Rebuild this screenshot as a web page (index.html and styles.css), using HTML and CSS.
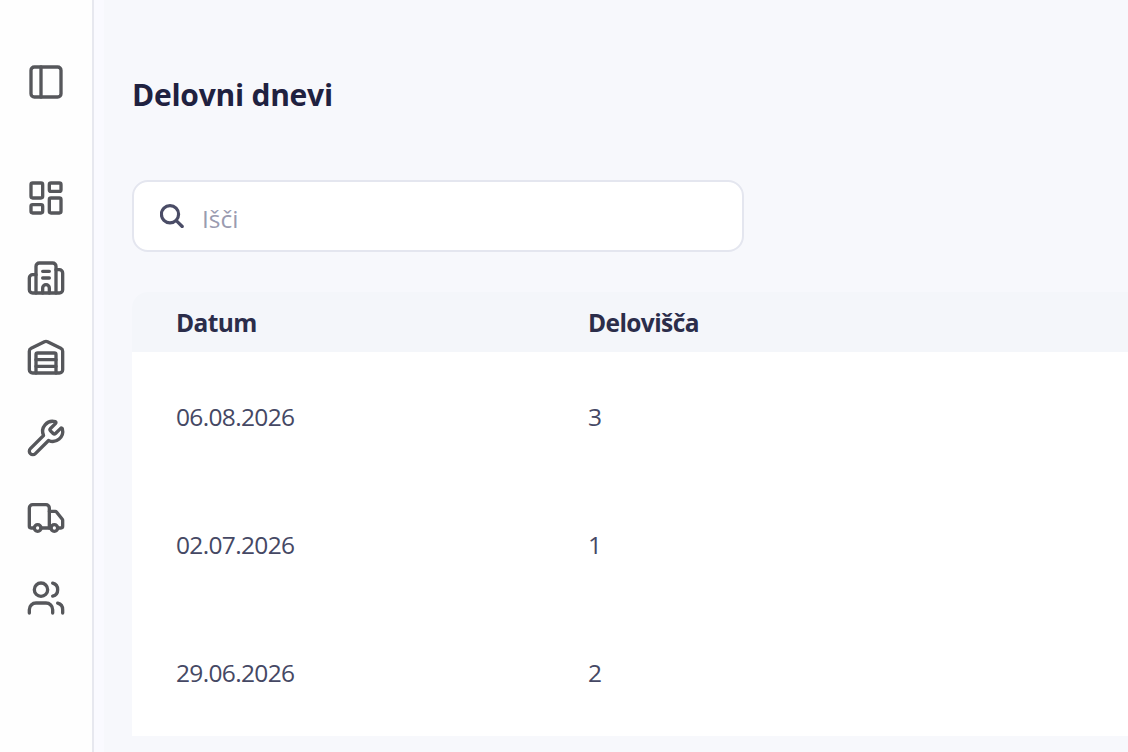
FILE: index.html
```
<!DOCTYPE html>
<html lang="sl">
	<head>
		<meta charset="UTF-8" />
		<meta name="viewport" content="width=device-width, initial-scale=1.0" />
		<title>Delovni dnevi</title>
		<link rel="stylesheet" href="styles.css">
	</head>
	<body>
		<nav class="sidebar">
			<a class="nav-icon toggle">
				<svg viewBox="0 0 24 24"><rect x="3" y="3" width="18" height="18" rx="2" /><path d="M9 3v18" /></svg>
			</a>
			<a class="nav-icon">
				<svg viewBox="0 0 24 24"><rect x="3" y="3" width="7" height="9" rx="1" /><rect x="14" y="3" width="7" height="5" rx="1" /><rect x="14" y="12" width="7" height="9" rx="1" /><rect x="3" y="16" width="7" height="5" rx="1" /></svg>
			</a>
			<a class="nav-icon">
				<svg viewBox="0 0 24 24"><path d="M10 12h4M10 8h4M14 21v-3a2 2 0 0 0-4 0v3" /><path d="M6 10H4a2 2 0 0 0-2 2v7a2 2 0 0 0 2 2h16a2 2 0 0 0 2-2V9a2 2 0 0 0-2-2h-2" /><path d="M6 21V5a2 2 0 0 1 2-2h8a2 2 0 0 1 2 2v16" /></svg>
			</a>
			<a class="nav-icon">
				<svg viewBox="0 0 24 24"><path d="M18 21V10a1 1 0 0 0-1-1H7a1 1 0 0 0-1 1v11" /><path d="M22 19a2 2 0 0 1-2 2H4a2 2 0 0 1-2-2V8a2 2 0 0 1 1.132-1.803l7.95-3.974a2 2 0 0 1 1.837 0l7.948 3.974A2 2 0 0 1 22 8z" /><path d="M6 13h12M6 17h12" /></svg>
			</a>
			<a class="nav-icon">
				<svg viewBox="0 0 24 24"><path d="M14.7 6.3a1 1 0 0 0 0 1.4l1.6 1.6a1 1 0 0 0 1.4 0l3.106-3.105c.32-.322.863-.22.983.218a6 6 0 0 1-8.259 7.057l-7.91 7.91a1 1 0 0 1-2.999-3l7.91-7.91a6 6 0 0 1 7.057-8.259c.438.12.54.662.219.984z" /></svg>
			</a>
			<a class="nav-icon">
				<svg viewBox="0 0 24 24"><path d="M14 18V6a2 2 0 0 0-2-2H4a2 2 0 0 0-2 2v11a1 1 0 0 0 1 1h2" /><path d="M15 18H9" /><path d="M19 18h2a1 1 0 0 0 1-1v-3.65a1 1 0 0 0-.22-.624l-3.48-4.35A1 1 0 0 0 17.52 8H14" /><circle cx="17" cy="18" r="2" /><circle cx="7" cy="18" r="2" /></svg>
			</a>
			<a class="nav-icon">
				<svg viewBox="0 0 24 24"><path d="M16 21v-2a4 4 0 0 0-4-4H6a4 4 0 0 0-4 4v2" /><circle cx="9" cy="7" r="4" /><path d="M22 21v-2a4 4 0 0 0-3-3.87M16 3.13a4 4 0 0 1 0 7.75" /></svg>
			</a>
		</nav>
		<main class="content">
			<h1>Delovni dnevi</h1>
			<label class="search">
				<svg viewBox="0 0 24 24"><circle cx="10" cy="10.2" r="8.6" /><path d="M16.3 16.6l5.9 5.9" /></svg>
				<input type="text" placeholder="Išči" />
			</label>
			<table class="days">
				<thead>
					<tr><th class="date">Datum</th><th>Delovišča</th></tr>
				</thead>
				<tbody>
					<tr><td>06.08.2026</td><td>3</td></tr>
					<tr><td>02.07.2026</td><td>1</td></tr>
					<tr><td>29.06.2026</td><td>2</td></tr>
				</tbody>
			</table>
		</main>
	</body>
</html>
```

FILE: styles.css
```
* {
	box-sizing: border-box;
}
body {
	margin: 0;
	display: flex;
	height: 100vh;
	overflow: hidden;
	font-family: "Open Sans", "Noto Sans", sans-serif;
	font-size: 24.5px;
	background: #f7f8fc;
	color: #454864;
}
.sidebar {
	flex: none;
	width: 94px;
	padding-top: 62px;
	display: flex;
	flex-direction: column;
	align-items: center;
	gap: 40px;
	background: #fefefe;
	border-right: 2px solid #e7e8ef;
}
.nav-icon {
	width: 40px;
	height: 40px;
}
.nav-icon.toggle {
	margin-bottom: 36px;
}
.nav-icon svg {
	display: block;
	fill: none;
	stroke: #56575b;
	stroke-width: 2;
	stroke-linecap: round;
	stroke-linejoin: round;
}
.content {
	flex: 1;
	min-width: 0;
	padding: 74px 0 0 28px;
	border-left: 10px solid #fafaff;
}
h1 {
	margin: 0 0 64px;
	font-size: 30px;
	line-height: 42px;
	font-weight: 700;
	letter-spacing: -0.25px;
	color: #1f2140;
}
.search {
	display: flex;
	align-items: center;
	width: 612px;
	height: 72px;
	padding: 0 26px;
	gap: 18px;
	background: #fff;
	border: 2px solid #e4e6ef;
	border-radius: 16px;
}
.search svg {
	width: 24px;
	height: 24px;
	fill: none;
	stroke: #4a4c66;
	stroke-width: 3.2;
	stroke-linecap: round;
}
.search input {
	flex: 1;
	padding: 4px 0 0;
	border: none;
	outline: none;
	background: none;
	font: inherit;
}
.search input::placeholder {
	color: #9a9bb0;
}
.days {
	width: 100%;
	margin-top: 40px;
	border-spacing: 0;
	table-layout: fixed;
	text-align: left;
}
th,
td {
	padding: 0 0 0 44px;
}
th {
	height: 60px;
	background: #f4f6fa;
	color: #2b2d4a;
	font-weight: 700;
	letter-spacing: -0.6px;
}
th.date {
	width: 412px;
	border-top-left-radius: 16px;
}
td {
	height: 128px;
	background: #fff;
	letter-spacing: -0.65px;
}
```
